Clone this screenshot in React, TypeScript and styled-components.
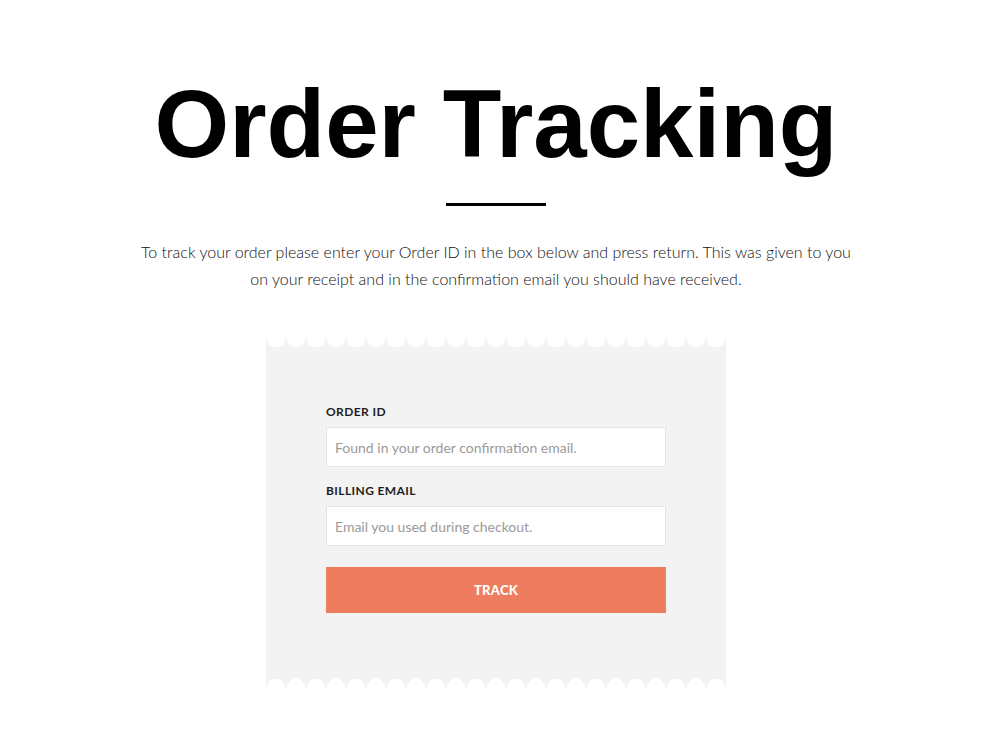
import React from 'react'
import styled, { createGlobalStyle } from 'styled-components'

const GlobalStyle = createGlobalStyle`
  html, body {
    margin: 0;
    padding: 0;
    background: #fff;
  }
  body {
    font-family: Lato, "Liberation Sans", sans-serif;
    color: #333;
  }
  * {
    box-sizing: border-box;
  }
`

const Page = styled.main`
  display: flex;
  flex-direction: column;
  align-items: center;
  padding-top: 76px;
  padding-bottom: 40px;
`

const Title = styled.h1`
  margin: 0;
  font-family: "Liberation Sans", Arial, sans-serif;
  font-weight: 700;
  font-size: 96px;
  line-height: 96px;
  color: #000;
  letter-spacing: 0;
`

const Rule = styled.div`
  width: 100px;
  height: 3px;
  background: #000;
  margin-top: 31px;
`

const Intro = styled.p`
  margin: 32px 0 0;
  max-width: 740px;
  text-align: center;
  font-size: 16px;
  font-weight: 300;
  line-height: 27px;
  color: #111;
`

const Ticket = styled.section`
  margin-top: 46px;
  width: 460px;
  padding: 67px 60px 75px;
  display: flex;
  flex-direction: column;
  background:
    radial-gradient(circle at 10px 0, #fff 9px, transparent 9.6px) top left / 20px 20px repeat-x,
    radial-gradient(circle at 10px 20px, #fff 9px, transparent 9.6px) bottom left / 20px 20px repeat-x,
    #f3f3f3;
`

const Field = styled.label<{ $gap?: number }>`
  display: flex;
  flex-direction: column;
  margin-top: ${({ $gap }) => $gap ?? 0}px;
`

const FieldLabel = styled.span`
  font-size: 12px;
  line-height: 14px;
  font-weight: 700;
  letter-spacing: 0.4px;
  color: #1e1e1e;
  margin-bottom: 8px;
`

const Input = styled.input`
  height: 40px;
  width: 100%;
  border: 1px solid #e4e4e4;
  background: #fff;
  padding: 0 8px;
  font-family: Lato, "Liberation Sans", sans-serif;
  font-size: 14px;
  color: #333;
  outline: none;

  &::placeholder {
    color: #9a9a9a;
  }
`

const TrackButton = styled.button`
  margin-top: 21px;
  height: 46px;
  width: 100%;
  border: 0;
  background: #ee7c5e;
  color: #fff;
  font-family: Lato, "Liberation Sans", sans-serif;
  font-weight: 900;
  font-size: 13px;
  letter-spacing: 0.3px;
  cursor: pointer;
`

const App: React.FC = () => (
  <>
    <GlobalStyle />
    <Page>
      <Title>Order Tracking</Title>
      <Rule />
      <Intro>
        To track your order please enter your Order ID in the box below and press return. This was given to you
        <br />
        on your receipt and in the confirmation email you should have received.
      </Intro>
      <Ticket>
        <Field>
          <FieldLabel>ORDER ID</FieldLabel>
          <Input placeholder="Found in your order confirmation email." />
        </Field>
        <Field $gap={17}>
          <FieldLabel>BILLING EMAIL</FieldLabel>
          <Input placeholder="Email you used during checkout." />
        </Field>
        <TrackButton type="button">TRACK</TrackButton>
      </Ticket>
    </Page>
  </>
)

export default App
